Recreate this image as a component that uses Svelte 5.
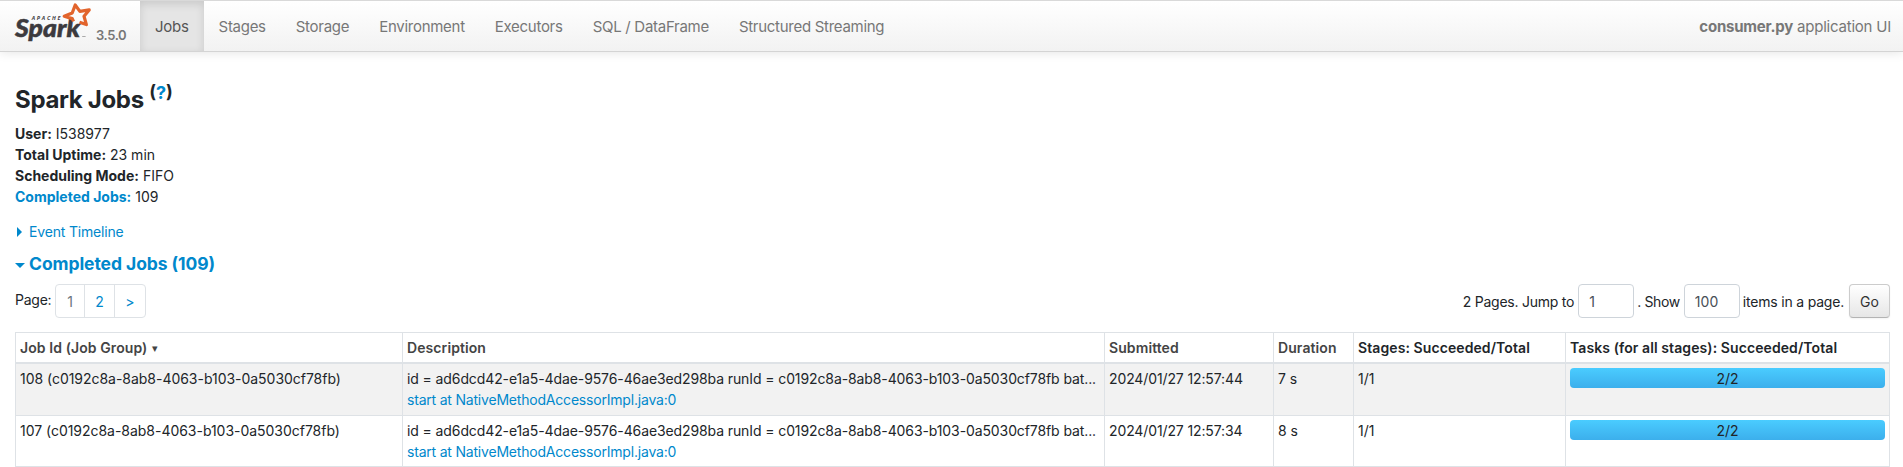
<script>
  const tabs = [
    { label: 'Jobs', active: true },
    { label: 'Stages' },
    { label: 'Storage' },
    { label: 'Environment' },
    { label: 'Executors' },
    { label: 'SQL / DataFrame' },
    { label: 'Structured Streaming' }
  ];
  const group = 'c0192c8a-8ab8-4063-b103-0a5030cf78fb';
  const description = `id = ad6dcd42-e1a5-4dae-9576-46ae3ed298ba runId = ${group} bat...`;
  const jobs = [
    { id: 108, submitted: '2024/01/27 12:57:44', duration: '7 s' },
    { id: 107, submitted: '2024/01/27 12:57:34', duration: '8 s' }
  ];
</script>

<nav class="navbar">
  <a class="brand" href="#jobs">
    <svg class="logo" width="78" height="46" viewBox="0 0 78 46">
      <text class="apache" x="16.8" y="19.4" textLength="28.5" lengthAdjust="spacing">APACHE</text>
      <text class="spark" x="0" y="35.8" textLength="65" lengthAdjust="spacingAndGlyphs">Spark</text>
      <path class="star" d="M58.6 20.4 L57.2 17.6 L49.2 15.2 L57.2 12 L60.2 4 L64.9 10.4 L74.2 8.9 L69 15.2 L71.4 23.6 L64.5 21.2" />
      <path class="tm" d="M67.2 35.5h3.4" />
    </svg>
    <span class="version">3.5.0</span>
  </a>
  <ul class="tabs">
    {#each tabs as tab}
      <li class:active={tab.active}><a href="#tab">{tab.label}</a></li>
    {/each}
  </ul>
  <p class="app-name"><strong>consumer.py</strong> application UI</p>
</nav>

<main>
  <h3>Spark Jobs <sup>(<a href="#help">?</a>)</sup></h3>
  <ul class="summary">
    <li><strong>User:</strong> I538977</li>
    <li><strong>Total Uptime:</strong> 23 min</li>
    <li><strong>Scheduling Mode:</strong> FIFO</li>
    <li><a href="#completed"><strong>Completed Jobs:</strong></a> 109</li>
  </ul>

  <div class="timeline"><span class="arrow right"></span><a href="#timeline">Event Timeline</a></div>
  <h4><span class="arrow down"></span><a href="#completed">Completed Jobs (109)</a></h4>

  <div class="paging">
    <span class="page-label">Page:</span>
    <div class="pages">
      <span class="current">1</span><a href="#p2">2</a><a href="#next">&gt;</a>
    </div>
    <form class="jump">
      <label for="page">2 Pages. Jump to</label>
      <input id="page" value="1" />
      <label for="size" class="show">. Show</label>
      <input id="size" value="100" />
      <span class="items">items in a page.</span>
      <button type="button">Go</button>
    </form>
  </div>

  <table>
    <colgroup>
      <col class="c1" /><col class="c2" /><col class="c3" /><col class="c4" /><col class="c5" /><col class="c6" />
    </colgroup>
    <thead>
      <tr>
        <th class="sort">Job Id (Job Group) <span class="caret">▾</span></th>
        <th class="sort">Description</th>
        <th class="sort">Submitted</th>
        <th class="sort">Duration</th>
        <th>Stages: Succeeded/Total</th>
        <th>Tasks (for all stages): Succeeded/Total</th>
      </tr>
    </thead>
    <tbody>
      {#each jobs as job}
        <tr>
          <td class="job">{job.id} ({group})</td>
          <td><div class="desc">{description}</div><a class="call" href="#job">start at NativeMethodAccessorImpl.java:0</a></td>
          <td class="date">{job.submitted}</td>
          <td>{job.duration}</td>
          <td>1/1</td>
          <td><div class="progress">2/2</div></td>
        </tr>
      {/each}
    </tbody>
  </table>
</main>

<style>
  :global(body) {
    margin: 0;
    background: #fff;
    color: #212529;
    font: 14px/21px Inter, "Liberation Sans", sans-serif;
    overflow: hidden;
  }
  a { color: #0088cc; text-decoration: none; }
  ul { list-style: none; margin: 0; padding: 0; }
  strong { font-weight: 700; }

  .navbar {
    display: flex;
    box-sizing: border-box;
    height: 52px;
    padding-right: 12px;
    border-top: 1px solid #d9d9d9;
    border-bottom: 1px solid #d4d4d4;
    background: linear-gradient(#fff, #f2f2f2);
    box-shadow: 0 1px 10px rgba(0, 0, 0, 0.1);
    color: #777;
    font-size: 15px;
    letter-spacing: -0.28px;
  }
  .brand { display: flex; width: 125px; padding-left: 15px; }
  .logo { flex: none; overflow: visible; letter-spacing: 0; }
  .apache { font: italic 700 5.4px "Open Sans", sans-serif; fill: #3c3a3e; }
  .spark { font: italic 900 24.5px Lato, sans-serif; fill: #3c3a3e; stroke: #3c3a3e; stroke-width: 0.5; }
  .star { fill: none; stroke: #e2642c; stroke-width: 3.2; stroke-linejoin: round; }
  .tm { stroke: #aaa; stroke-width: 1; }
  .version { padding-top: 24px; margin-left: 3px; color: #777; font-size: 13px; font-weight: 600; letter-spacing: -0.4px; }
  .tabs { display: flex; }
  .tabs a { display: block; padding: 15px 15px 14px; color: #777; }
  .tabs .active { background: #e5e5e5; box-shadow: inset 0 3px 8px rgba(0, 0, 0, 0.125); }
  .tabs .active a { color: #555; }
  .app-name { margin: 15px 0 0 auto; letter-spacing: -0.22px; }

  main { padding: 0 13px 0 15px; }
  h3 { margin: 0; padding-top: 33px; font-size: 24px; line-height: 30px; font-weight: 700; letter-spacing: -0.33px; }
  sup { font-size: 18px; line-height: 0; vertical-align: 9px; letter-spacing: 0; }
  .summary { padding-top: 8px; }
  .timeline { display: flex; align-items: center; padding-top: 14px; letter-spacing: -0.18px; }
  h4 { display: flex; align-items: center; margin: 0; padding-top: 11px; font-size: 17.5px; line-height: 21px; font-weight: 700; letter-spacing: -0.07px; }
  .arrow { box-sizing: border-box; width: 14px; height: 10px; }
  .right::before { content: ""; display: block; margin-left: 2px; border: solid transparent; border-width: 5px 0 5px 5px; border-left-color: #0088cc; width: 0; }
  .down::before { content: ""; display: block; margin-top: 4px; border: solid transparent; border-width: 5px 5px 0; border-top-color: #0088cc; width: 0; }

  .paging { display: flex; height: 48px; padding-top: 10px; }
  .page-label { width: 40px; padding-top: 5px; white-space: nowrap; letter-spacing: -0.25px; }
  .pages { display: flex; box-sizing: border-box; height: 34px; border: 1px solid #dee2e6; border-radius: 4px; }
  .pages > * { box-sizing: border-box; width: 30px; padding-top: 6px; text-align: center; }
  .pages > * + * { border-left: 1px solid #dee2e6; }
  .pages .current { color: #6c757d; width: 28px; }
  .pages > :last-child { width: 31px; }
  .jump { display: flex; align-items: center; height: 34px; margin-left: auto; letter-spacing: -0.25px; }
  .jump .show { letter-spacing: -0.35px; }
  .jump .items { letter-spacing: -0.2px; }
  .jump input {
    box-sizing: border-box; width: 56px; height: 34px; margin: 0 3px 0 4px; padding: 0 10px;
    border: 1px solid #ced4da; border-radius: 4px; color: #495057; font: inherit; background: #fff;
  }
  button {
    box-sizing: border-box; width: 41px; height: 34px; margin-left: 5px; padding: 0;
    border: 1px solid #ccc; border-bottom-color: #b3b3b3; border-radius: 4px;
    background: linear-gradient(#fff, #e6e6e6); box-shadow: 0 1px 2px rgba(0, 0, 0, 0.05);
    color: #333; font: inherit;
  }

  table {
    width: 1875px; table-layout: fixed; border-collapse: separate; border-spacing: 0;
    border: solid #dee2e6; border-width: 1px 0 0 1px;
  }
  .c1 { width: 387px; } .c2 { width: 702px; } .c3 { width: 169px; }
  .c4 { width: 80px; } .c5 { width: 212px; } .c6 { width: 324px; }
  th, td { padding: 4px; border: solid #dee2e6; border-width: 0 1px 1px 0; text-align: left; vertical-align: top; white-space: nowrap; }
  th { border-bottom-width: 2px; font-weight: 600; letter-spacing: 0.09px; }
  .sort { color: #444; }
  .caret { font-family: "DejaVu Sans", sans-serif; font-size: 11px; line-height: 1; vertical-align: 1px; margin-left: 1px; }
  td { height: 43px; }
  tbody tr:last-child td { height: 42px; }
  tbody tr:first-child { background: #f2f2f2; }
  .job { letter-spacing: -0.03px; }
  .desc { letter-spacing: -0.105px; }
  .call { letter-spacing: -0.2px; }
  .date { letter-spacing: -0.12px; }
  .progress { height: 20px; border-radius: 4px; background: linear-gradient(#4accff, #3cafec); text-align: center; }
</style>
